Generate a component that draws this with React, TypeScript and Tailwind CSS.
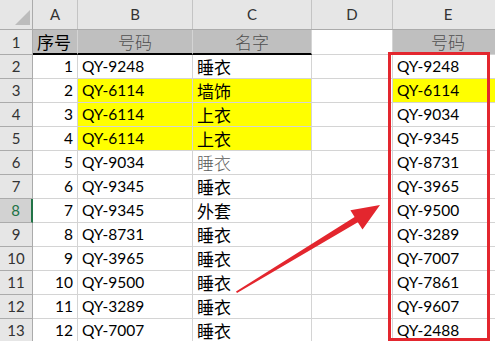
import { FC } from "react";

interface SheetRow {
  num: number;
  seq: number;
  code: string;
  name: string;
  lookup: string;
  marked?: boolean;
  markedLookup?: boolean;
  faded?: boolean;
}

const rows: SheetRow[] = [
  { num: 2, seq: 1, code: "QY-9248", name: "睡衣", lookup: "QY-9248" },
  { num: 3, seq: 2, code: "QY-6114", name: "墙饰", lookup: "QY-6114", marked: true, markedLookup: true },
  { num: 4, seq: 3, code: "QY-6114", name: "上衣", lookup: "QY-9034", marked: true },
  { num: 5, seq: 4, code: "QY-6114", name: "上衣", lookup: "QY-9345", marked: true },
  { num: 6, seq: 5, code: "QY-9034", name: "睡衣", lookup: "QY-8731", faded: true },
  { num: 7, seq: 6, code: "QY-9345", name: "睡衣", lookup: "QY-3965" },
  { num: 8, seq: 7, code: "QY-9345", name: "外套", lookup: "QY-9500" },
  { num: 9, seq: 8, code: "QY-8731", name: "睡衣", lookup: "QY-3289" },
  { num: 10, seq: 9, code: "QY-3965", name: "睡衣", lookup: "QY-7007" },
  { num: 11, seq: 10, code: "QY-9500", name: "睡衣", lookup: "QY-7861" },
  { num: 12, seq: 11, code: "QY-3289", name: "睡衣", lookup: "QY-9607" },
  { num: 13, seq: 12, code: "QY-7007", name: "睡衣", lookup: "QY-2488" },
];

const latin = "font-['Lato','Liberation_Sans',sans-serif]";
const cjk = "font-['Noto_Sans_CJK_SC',sans-serif]";
const cell = "h-full flex items-center border-r border-[#d4d4d4] shrink-0";

const ColumnHeaders: FC = () => (
  <div className={`flex h-[30px] bg-[#e6e6e6] border-b border-[#ababab] text-[15px] text-[#333] ${latin}`}>
    <div className="relative w-[33px] h-full border-r border-[#ababab] shrink-0">
      <svg className="absolute left-0 top-0" width="33" height="29">
        <polygon points="15,25 30,25 30,10" fill="#bcbcbc" />
      </svg>
    </div>
    <div className="w-[45px] h-full flex items-center justify-center border-r border-[#c4c4c4] shrink-0">A</div>
    <div className="w-[115px] h-full flex items-center justify-center border-r border-[#c4c4c4] shrink-0">B</div>
    <div className="w-[119px] h-full flex items-center justify-center border-r border-[#c4c4c4] shrink-0">C</div>
    <div className="w-[81px] h-full flex items-center justify-center border-r border-[#c4c4c4] shrink-0">D</div>
    <div className="w-[110px] h-full flex items-center justify-center shrink-0">E</div>
  </div>
);

const TitleRow: FC = () => (
  <div className="flex h-[25px]">
    <div className={`w-[33px] h-full flex items-center justify-center bg-[#e6e6e6] border-r border-b border-[#ababab] text-[15px] text-[#333] shrink-0 ${latin}`}>
      1
    </div>
    <div className={`w-[45px] ${cell} bg-[#bfbfbf] border-b-2 border-b-black pl-[4px] text-[17px] text-black ${cjk}`}>
      序号
    </div>
    <div className={`w-[115px] ${cell} justify-center bg-[#bfbfbf] border-b-2 border-b-black text-[17px] font-light text-[#4f4f4f] ${cjk}`}>
      号码
    </div>
    <div className={`w-[119px] ${cell} justify-center bg-[#bfbfbf] border-b-2 border-b-black text-[17px] font-light text-[#4f4f4f] ${cjk}`}>
      名字
    </div>
    <div className={`w-[81px] ${cell} border-b border-b-[#d4d4d4]`} />
    <div className={`w-[110px] h-full flex items-center justify-center bg-[#bfbfbf] border-b border-[#d4d4d4] text-[17px] font-light text-[#4f4f4f] shrink-0 ${cjk}`}>
      号码
    </div>
  </div>
);

const DataRow: FC<{ row: SheetRow }> = ({ row }) => {
  const selected = row.num === 8;
  return (
    <div className="flex h-[24px]">
      <div
        className={`w-[33px] h-full flex items-center justify-center border-b border-[#ababab] text-[15px] shrink-0 ${latin} ${
          selected
            ? "bg-[#d2d2d2] text-[#217346] border-r-2 border-r-[#217346]"
            : "bg-[#e6e6e6] text-[#333] border-r border-r-[#ababab]"
        }`}
      >
        {row.num}
      </div>
      <div className={`w-[45px] ${cell} border-b justify-end pr-[4px] text-[15.5px] text-black ${latin}`}>
        {row.seq}
      </div>
      <div
        className={`w-[115px] ${cell} border-b pl-[4px] text-[15.5px] text-black ${latin} ${
          row.marked ? "bg-[#ffff00]" : ""
        }`}
      >
        {row.code}
      </div>
      <div
        className={`w-[119px] ${cell} border-b pl-[4px] text-[17px] ${cjk} ${row.marked ? "bg-[#ffff00]" : ""} ${
          row.faded ? "text-[#5a5a5a] font-light" : "text-black"
        }`}
      >
        {row.name}
      </div>
      <div className={`w-[81px] ${cell} border-b`} />
      <div
        className={`w-[110px] h-full flex items-center border-b border-[#d4d4d4] pl-[4px] text-[15.5px] text-black shrink-0 ${latin} ${
          row.markedLookup ? "bg-[#ffff00]" : ""
        }`}
      >
        {row.lookup}
      </div>
    </div>
  );
};

const Annotations: FC = () => (
  <svg className="absolute left-0 top-0 pointer-events-none" width="495" height="341">
    <rect x="389.5" y="53.5" width="99" height="286" fill="none" stroke="#e3262e" strokeWidth="3" />
    <polygon
      points="237,293 357.8,222.3 362.5,229.5 380,205 350.4,210.3 354.6,217.1 236,291.5"
      fill="#e3262e"
    />
  </svg>
);

const App: FC = () => {
  return (
    <div className="relative w-[495px] h-[341px] overflow-hidden bg-white">
      <ColumnHeaders />
      <TitleRow />
      {rows.map((row) => (
        <DataRow key={row.num} row={row} />
      ))}
      <Annotations />
    </div>
  );
};

export default App;
